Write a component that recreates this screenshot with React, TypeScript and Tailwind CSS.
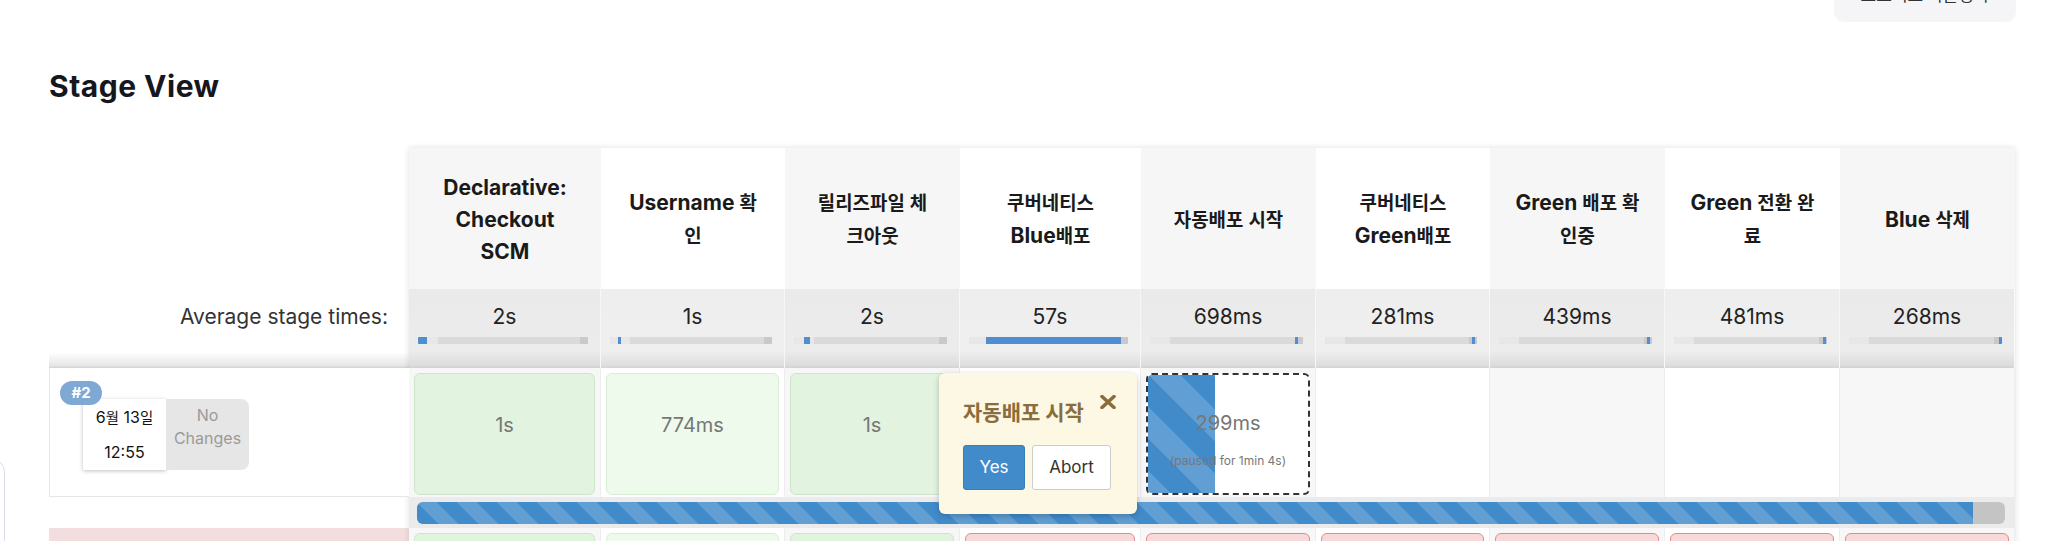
import React from 'react';

const HANGUL = /([\uAC00-\uD7A3\u3131-\u318E]+)/;

function K({ t }: { t: string }) {
  const parts = t.split(HANGUL);
  return (
    <>
      {parts.map((p, i) =>
        i % 2 === 1 ? (
          <span key={i} className="text-[0.9em]">
            {p}
          </span>
        ) : (
          <React.Fragment key={i}>{p}</React.Fragment>
        )
      )}
    </>
  );
}

type Stage = {
  wc: string;
  name: string[];
  avg: string;
  blue: [number, number];
  cur: 'ok' | 'run' | 'none';
  curText?: string;
  prev: 'ok' | 'fail';
};

const stages: Stage[] = [
  { wc: 'w-[192px]', name: ['Declarative:', 'Checkout', 'SCM'], avg: '2s', blue: [0, 9], cur: 'ok', curText: '1s', prev: 'ok' },
  { wc: 'w-[184px]', name: ['Username 확', '인'], avg: '1s', blue: [8, 3], cur: 'ok', curText: '774ms', prev: 'ok' },
  { wc: 'w-[175px]', name: ['릴리즈파일 체', '크아웃'], avg: '2s', blue: [10, 6], cur: 'ok', curText: '1s', prev: 'ok' },
  { wc: 'w-[181px]', name: ['쿠버네티스', 'Blue배포'], avg: '57s', blue: [17, 135], cur: 'ok', curText: '', prev: 'fail' },
  { wc: 'w-[175px]', name: ['자동배포 시작'], avg: '698ms', blue: [145, 3], cur: 'run', prev: 'fail' },
  { wc: 'w-[174px]', name: ['쿠버네티스', 'Green배포'], avg: '281ms', blue: [147, 3], cur: 'none', prev: 'fail' },
  { wc: 'w-[175px]', name: ['Green 배포 확', '인중'], avg: '439ms', blue: [148, 3], cur: 'none', prev: 'fail' },
  { wc: 'w-[175px]', name: ['Green 전환 완', '료'], avg: '481ms', blue: [149, 3], cur: 'none', prev: 'fail' },
  { wc: 'w-[175px]', name: ['Blue 삭제'], avg: '268ms', blue: [150, 3], cur: 'none', prev: 'fail' },
];

const STRIPES =
  'bg-[linear-gradient(45deg,rgba(255,255,255,0.16)_25%,transparent_25%,transparent_50%,rgba(255,255,255,0.16)_50%,rgba(255,255,255,0.16)_75%,transparent_75%,transparent)]';

export default function App() {
  return (
    <div className="flex w-[2048px] h-[541px] overflow-hidden bg-white font-['Inter','Noto_Sans_CJK_KR',sans-serif] text-[#222]">
      {/* left gutter with clipped sidebar card */}
      <div className="w-[49px] shrink-0">
        <div className="mt-[458px] -ml-[200px] w-[205px] h-[200px] rounded-[14px] border border-[#dcdcec]" />
      </div>

      <div className="flex-1 min-w-0 flex flex-col">
        {/* top action button (clipped) */}
        <div className="h-[22px] flex items-end justify-end pr-[32px]">
          <div className="h-[50px] w-[182px] shrink-0 rounded-[10px] bg-[#f5f5f8] flex items-end justify-center pb-[16px] text-[17px] leading-[24px] text-[#333] font-['Noto_Sans_CJK_KR',sans-serif]">
            프로젝트 비활성화
          </div>
        </div>

        <h2 className="mt-[46px] text-[30px] leading-[36px] font-bold tracking-[0.5px] text-[#16161d]">
          Stage View
        </h2>

        {/* table */}
        <div className="mt-[44px] flex">
          {/* left labels */}
          <div className="w-[360px] shrink-0 flex flex-col">
            <div className="h-[141px]" />
            <div className="h-[79px] flex justify-end pt-[14px] pr-[21px] text-[21px] leading-[28px] text-[#333] bg-[linear-gradient(to_bottom,#ffffff_0%,#ffffff_80%,#e6e6e6_97%,#d2d2d2_100%)]">
              Average stage times:
            </div>
            <div className="relative h-[129px] border-l border-b border-[#e6e6e6] bg-white">
              <div className="absolute left-[10px] top-[13px] z-10 w-[42px] h-[24px] rounded-full bg-[#80a8d4] text-white font-bold text-[15px] leading-[24px] text-center">
                #2
              </div>
              <div className="ml-[33px] mt-[31px] flex">
                <div className="w-[83px] h-[71px] bg-white shadow-[0_1px_4px_rgba(0,0,0,0.25)] text-center text-[16px] leading-[34px] pt-[1px] text-[#111]">
                  <div>
                    <K t="6월 13일" />
                  </div>
                  <div>12:55</div>
                </div>
                <div className="w-[83px] h-[71px] rounded-r-[8px] bg-[#e6e6e6] text-center text-[16px] leading-[23px] pt-[5px] text-[#9a9a9a]">
                  <div>No</div>
                  <div>Changes</div>
                </div>
              </div>
            </div>
            <div className="h-[31px] bg-white" />
            <div className="h-[120px] bg-[#f2dede]" />
          </div>

          {/* stage grid */}
          <div className="flex flex-col shadow-[0_0_6px_rgba(0,0,0,0.13)]">
            {/* header row */}
            <div className="flex h-[141px]">
              {stages.map((s, i) => (
                <div
                  key={i}
                  className={`${s.wc} shrink-0 flex flex-col items-center justify-center pt-[3px] text-center text-[21px] leading-[32px] font-bold text-[#1a1a1a] whitespace-nowrap ${
                    i % 2 === 0 ? 'bg-[#f6f6f6]' : 'bg-white'
                  }`}
                >
                  {s.name.map((l, j) => (
                    <div key={j}>
                      <K t={l} />
                    </div>
                  ))}
                </div>
              ))}
            </div>

            {/* average row */}
            <div className="flex h-[79px]">
              {stages.map((s, i) => (
                <div
                  key={i}
                  className={`${s.wc} shrink-0 pt-[14px] border-r border-[#f7f7f7] ${
                    i % 2 === 0
                      ? 'bg-[linear-gradient(to_bottom,#eaeaea_0%,#ececec_78%,#dcdcdc_97%,#d0d0d0_100%)]'
                      : 'bg-[linear-gradient(to_bottom,#eeeeee_0%,#efefef_78%,#dedede_97%,#d2d2d2_100%)]'
                  }`}
                >
                  <div className="text-center text-[21px] leading-[28px] text-[#222]">{s.avg}</div>
                  <div className="relative mt-[6px] ml-[9px] mr-[12px] h-[7px] bg-[#dadada] overflow-hidden rounded-[1px]">
                    <div className="absolute inset-y-0 left-0 w-[20px] bg-[#e7e7e7]" />
                    <div className="absolute inset-y-0 right-0 w-[8px] bg-[#c9c9c9]" />
                    <div
                      className="absolute inset-y-0 bg-[#4f8fd1]"
                      style={{ left: s.blue[0], width: s.blue[1] }}
                    />
                  </div>
                </div>
              ))}
            </div>

            {/* current run row */}
            <div className="relative flex h-[129px]">
              {stages.map((s, i) => (
                <div
                  key={i}
                  className={`${s.wc} shrink-0 px-[5px] pt-[5px] border-r border-[#ededed] ${
                    i % 2 === 0 ? 'bg-[#f7f7f7]' : 'bg-white'
                  }`}
                >
                  {s.cur === 'ok' && (
                    <div
                      className={`h-[122px] rounded-[6px] border pt-[37px] text-center text-[20px] leading-[28px] text-[#777] ${
                        i % 2 === 0 ? 'bg-[#e2f3df] border-[#cde6c9]' : 'bg-[#eefbec] border-[#d8eed5]'
                      }`}
                    >
                      {s.curText}
                    </div>
                  )}
                  {s.cur === 'run' && (
                    <div className="relative h-[122px] rounded-[6px] border-2 border-dashed border-[#333] bg-white overflow-hidden text-center">
                      <div className={`absolute inset-y-0 left-0 w-[42%] bg-[#428bca] ${STRIPES} bg-[length:64px_64px]`} />
                      <div className="relative pt-[34px] text-[20px] leading-[28px] text-[#777]">299ms</div>
                      <div className="relative mt-[16px] text-[12px] leading-[16px] text-[#777] whitespace-nowrap">
                        (paused for 1min 4s)
                      </div>
                    </div>
                  )}
                </div>
              ))}

              {/* input popup */}
              <div className="absolute left-[530px] top-[5px] z-20 w-[198px] h-[141px] rounded-[6px] bg-[#fcf8e3] shadow-[0_2px_6px_rgba(0,0,0,0.22)] pt-[26px] px-[24px]">
                <div className="text-[21px] leading-[28px] font-bold text-[#8a6d3b] whitespace-nowrap">
                  자동배포 시작
                </div>
                <svg
                  className="absolute right-[21px] top-[22px]"
                  width="16"
                  height="14"
                  viewBox="0 0 16 14"
                >
                  <path d="M2 1.5 L14 12.5 M14 1.5 L2 12.5" stroke="#8a6d3b" strokeWidth="3.6" strokeLinecap="round" />
                </svg>
                <div className="mt-[18px] flex gap-[7px]">
                  <div className="w-[62px] h-[45px] rounded-[3px] bg-[#428bca] border border-[#357ebd] text-white text-[17px] leading-[43px] text-center">
                    Yes
                  </div>
                  <div className="w-[79px] h-[45px] rounded-[3px] bg-white border border-[#cccccc] text-[#333] text-[17px] leading-[43px] text-center">
                    Abort
                  </div>
                </div>
              </div>
            </div>

            {/* run progress row */}
            <div className="h-[31px] bg-[#ebebeb] pt-[5px] pl-[8px] pr-[10px]">
              <div className="h-[22px] rounded-[6px] bg-[#c4c4c4] overflow-hidden">
                <div className={`h-full w-[98%] bg-[#428bca] ${STRIPES} bg-[length:40px_40px]`} />
              </div>
            </div>

            {/* previous (failed) run row */}
            <div className="flex h-[120px]">
              {stages.map((s, i) => (
                <div
                  key={i}
                  className={`${s.wc} shrink-0 px-[5px] pt-[5px] border-r border-[#ededed] ${
                    i % 2 === 0 ? 'bg-[#f7f7f7]' : 'bg-white'
                  }`}
                >
                  <div
                    className={`h-[110px] rounded-[6px] border ${
                      s.prev === 'fail'
                        ? 'bg-[#f7d9d9] border-[#e38b8b]'
                        : i % 2 === 0
                        ? 'bg-[#e2f3df] border-[#cde6c9]'
                        : 'bg-[#eefbec] border-[#d8eed5]'
                    }`}
                  />
                </div>
              ))}
            </div>
          </div>
        </div>
      </div>
    </div>
  );
}
